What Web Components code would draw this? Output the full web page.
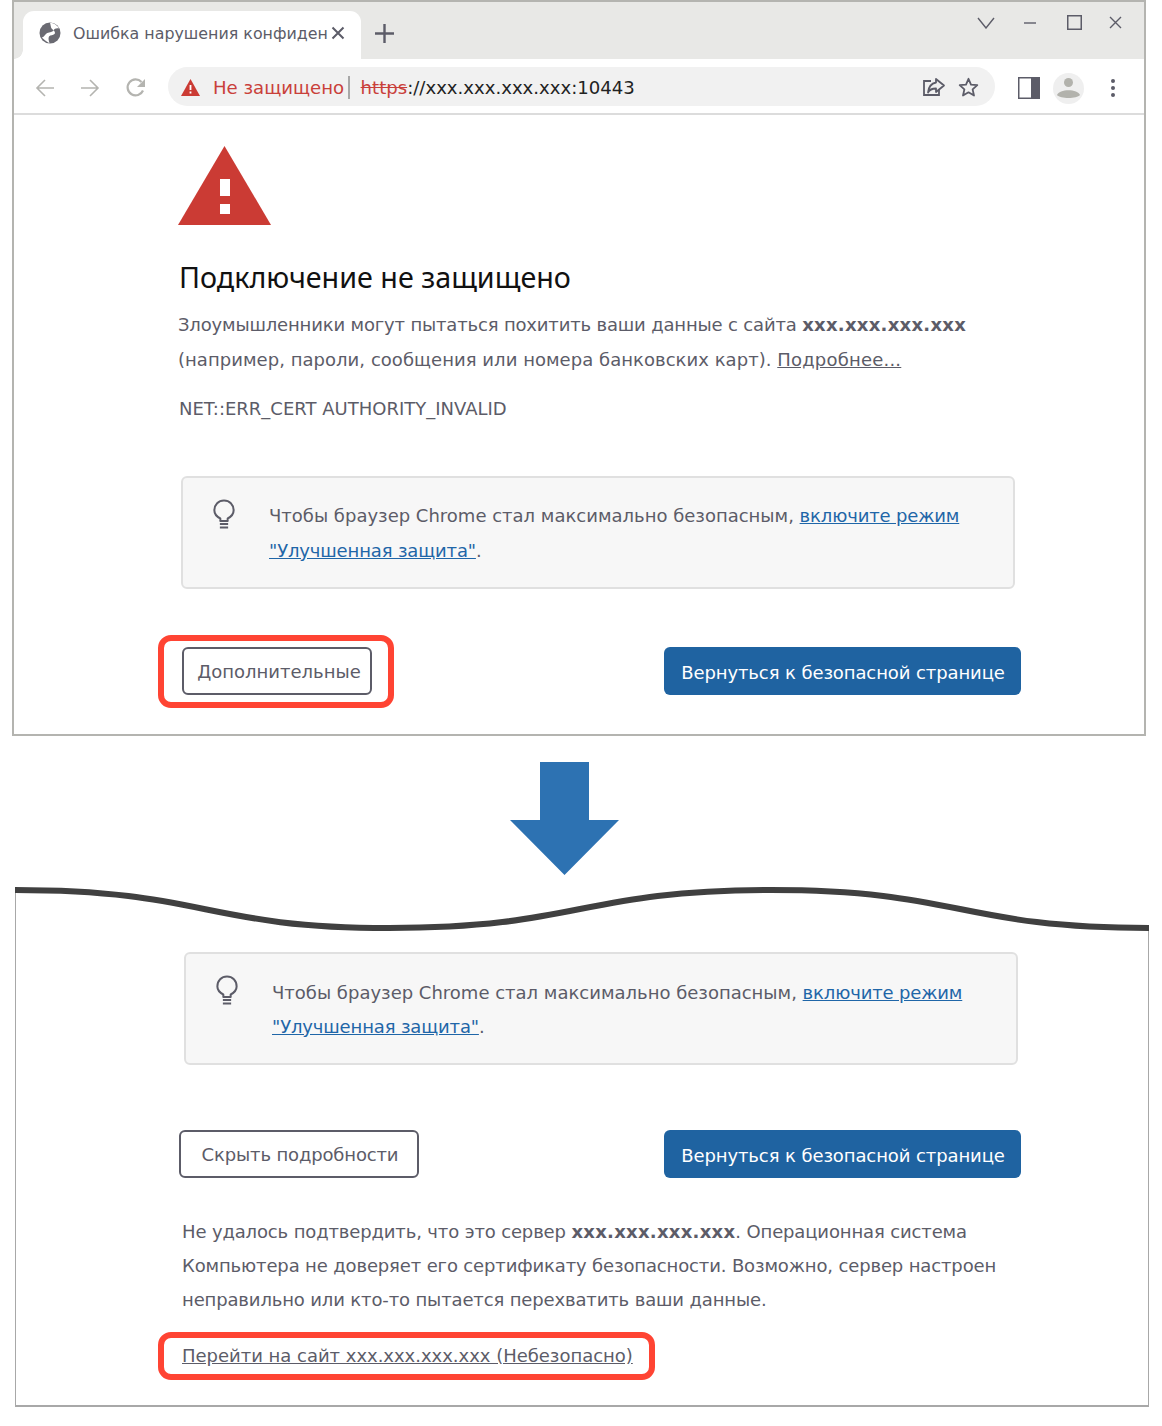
<!DOCTYPE html>
<html lang="ru">
<head>
<meta charset="utf-8">
<title>Ошибка нарушения конфиденциальности</title>
<style>
  html, body { margin: 0; padding: 0; background: #fff; }
  body {
    width: 1162px;
    height: 1426px;
    overflow: hidden;
    font-family: "DejaVu Sans", sans-serif;
    color: #5c5c68;
  }
  b { font-weight: 700; letter-spacing: .27px; }
  a { text-decoration: underline; color: inherit; }
  a.blue { color: #1f66a8; letter-spacing: -.15px; }
</style>
</head>
<body>

<browser-window>
  <warning-page>
    <span slot="heading">Подключение не защищено</span>
    <span slot="message"><span style="letter-spacing:-.17px">Злоумышленники могут пытаться похитить ваши данные с сайта </span><b>xxx.xxx.xxx.xxx</b><br><span style="letter-spacing:.04px">(например, пароли, сообщения или номера банковских карт). </span><a style="letter-spacing:.2px">Подробнее...</a></span>
    <span slot="code">NET::ERR_CERT AUTHORITY_INVALID</span>
  </warning-page>
  <info-box style="margin: 0 0 46px 167px">Чтобы браузер Chrome стал максимально безопасным, <a class="blue">включите режим<br>"Улучшенная защита"</a>.</info-box>
  <action-row style="padding-left: 144px">
    <red-ring style="--pad: 6px 16px 7px 18px"><outline-button style="--w: 190px; --text-pad: 4px">Дополнительные</outline-button></red-ring>
    <primary-button style="margin-top: 12px">Вернуться к безопасной странице</primary-button>
  </action-row>
</browser-window>

<down-arrow></down-arrow>

<torn-panel>
  <info-box style="margin: 0 0 65px 168px; --line: 34px; --top: 1px">Чтобы браузер Chrome стал максимально безопасным, <a class="blue">включите режим<br>"Улучшенная защита"</a>.</info-box>
  <action-row style="padding-left: 163px; padding-right: 127px">
    <outline-button style="--w: 240px; --text-pad: 2px; letter-spacing: -.15px">Скрыть подробности</outline-button>
    <primary-button>Вернуться к безопасной странице</primary-button>
  </action-row>
  <detail-text>Не удалось подтвердить, что это сервер <b>xxx.xxx.xxx.xxx</b>. Операционная система<br>Компьютера не доверяет его сертификату безопасности. Возможно, сервер настроен<br>неправильно или кто-то пытается перехватить ваши данные.</detail-text>
  <div style="padding-left: 142px">
    <red-ring style="--pad: 0 16px 1px 18px; --inline: inline-flex"><a style="font-size: 18px; line-height: 35px; white-space: nowrap; letter-spacing: -.02px">Перейти на сайт xxx.xxx.xxx.xxx (Небезопасно)</a></red-ring>
  </div>
</torn-panel>

<script>
// small helper: every element just stamps its markup into an open shadow root
function shadow(el, html) {
  el.attachShadow({ mode: 'open' }).innerHTML = html;
}

class BrowserWindow extends HTMLElement {
  constructor() {
    super();
    shadow(this, `
      <style>
        :host {
          display: block;
          box-sizing: border-box;
          width: 1134px;
          height: 736px;
          margin-left: 12px;
          border: 2px solid #b4b4b0;
        }
      </style>
      <tab-strip></tab-strip>
      <nav-toolbar></nav-toolbar>
      <slot></slot>
    `);
  }
}

class TabStrip extends HTMLElement {
  constructor() {
    super();
    shadow(this, `
      <style>
        :host {
          display: flex;
          align-items: flex-end;
          height: 57px;
          background: #e8e8e6;
          color: #5c5c68;
        }
        .tab {
          position: relative;
          display: flex;
          align-items: center;
          box-sizing: border-box;
          width: 338px;
          height: 48px;
          margin-left: 9px;
          padding: 0 0 4px 16px;
          background: #fff;
          border-radius: 11px 11px 0 0;
        }
        .tab::before {
          content: "";
          position: absolute;
          left: -9px;
          bottom: 0;
          width: 9px;
          height: 9px;
          background: radial-gradient(circle at 0 0, #e8e8e6 8.5px, #fff 9px);
        }
        .title {
          width: 257px;
          margin: 2px 0 0 12px;
          overflow: hidden;
          white-space: nowrap;
          font-size: 15.85px;
          line-height: 24px;
        }
        .plus { margin: 0 0 15px 13px; }
        .controls {
          display: flex;
          align-items: center;
          margin: 0 0 29px auto;
          padding-right: 22px;
          gap: 28px;
        }
        svg { display: block; flex: none; }
      </style>
      <div class="tab">
        <svg width="22" height="22" viewBox="0 0 22 22"><circle cx="11" cy="11" r="10.5" fill="#6a6a72"/><path d="M11 .8C15 1 18.500 3.500 20 6.500 17.500 5.800 15.500 6.500 14.500 8.500 13 10.500 9.500 10 7.500 11.500 5.500 13 5 15 2.800 15.500 4.500 17 7 19.500 10.500 21.200 9.800 18.500 9 16.500 10 14.500 11.500 12.800 14 13.500 15.500 12 17 10.500 15 8.500 13 7 11.500 5.500 11.800 3 11 .8Z" fill="#fff"/></svg>
        <span class="title">Ошибка нарушения конфиден</span>
        <svg width="14" height="14" viewBox="0 0 14 14" style="margin-left:1px"><path d="M1.500 1.500 12.500 12.500M12.500 1.500 1.500 12.500" stroke="#5c5c68" stroke-width="2"/></svg>
      </div>
      <svg class="plus" width="21" height="21" viewBox="0 0 21 21"><path d="M10.500 1V20M1 10.500H20" stroke="#5c5c68" stroke-width="2.400"/></svg>
      <div class="controls">
        <svg width="18" height="12" viewBox="0 0 18 12" style="margin-right:2px"><path d="M1 1 9 11 17 1" fill="none" stroke="#5c5c68" stroke-width="1.400"/></svg>
        <svg width="12" height="12" viewBox="0 0 12 12" style="margin-left:-1px"><path d="M0 6H12" stroke="#5c5c68" stroke-width="1.400"/></svg>
        <svg width="15" height="15" viewBox="0 0 15 15" style="margin-left:3px"><rect x=".75" y=".75" width="13.500" height="13.500" fill="none" stroke="#5c5c68" stroke-width="1.500"/></svg>
        <svg width="13" height="13" viewBox="0 0 13 13" style="margin-left:-1px"><path d="M1 1 12 12M12 1 1 12" stroke="#5c5c68" stroke-width="1.400"/></svg>
      </div>
    `);
  }
}

class NavToolbar extends HTMLElement {
  constructor() {
    super();
    shadow(this, `
      <style>
        :host {
          display: flex;
          align-items: center;
          box-sizing: border-box;
          height: 56px;
          padding: 0 0 0 21px;
          background: #fff;
          border-bottom: 2px solid #dcdcdc;
        }
        svg { display: block; flex: none; }
        .nudge { margin-top: 4px; }
        .omnibox {
          display: flex;
          align-items: center;
          box-sizing: border-box;
          width: 827px;
          height: 39px;
          margin-left: 21px;
          padding: 2px 16px 0 13px;
          border-radius: 20px;
          background: #f1f1f1;
          font-size: 18.1px;
          white-space: nowrap;
          color: #222;
        }
        .insecure { margin-left: 13px; color: #c9403a; }
        .sep { width: 1.5px; height: 23px; margin: 0 11px 0 4px; background: #a8a8a8; }
        .scheme { color: #c9403a; text-decoration: line-through; }
        .tail { display: flex; align-items: center; gap: 12px; margin-left: auto; }
        .right { display: flex; align-items: center; margin: 4px 0 0 23px; }
        .avatar { margin-left: 13px; }
        .dots { margin-left: 26px; }
      </style>
      <svg class="nudge" width="20" height="20" viewBox="0 0 20 20"><path d="M19 10H2M10 2 2 10 10 18" fill="none" stroke="#b4b4b0" stroke-width="1.600"/></svg>
      <svg class="nudge" width="20" height="20" viewBox="0 0 20 20" style="margin-left:25px"><path d="M1 10H18M10 2 18 10 10 18" fill="none" stroke="#b4b4b0" stroke-width="1.600"/></svg>
      <svg class="nudge" width="22" height="22" viewBox="0 0 22 22" style="margin-left:25px"><path d="M18 13.500A8 8 0 1 1 16.500 5" fill="none" stroke="#b4b4b0" stroke-width="2.200"/><path d="M20 2V10H12Z" fill="#b4b4b0"/></svg>
      <div class="omnibox">
        <svg width="19" height="17" viewBox="0 0 19 17"><path d="M9.500 0 19 17H0Z" fill="#cb3b34"/><path d="M8.600 6H10.400V11H8.600ZM8.600 12.500H10.400V14.400H8.600Z" fill="#fff"/></svg>
        <span class="insecure">Не защищено</span>
        <span class="sep"></span>
        <span><span class="scheme">https</span>://xxx.xxx.xxx.xxx:10443</span>
        <span class="tail">
          <svg width="24" height="20" viewBox="0 0 24 20"><path d="M9 4H2V18H17V13" fill="none" stroke="#5c5c68" stroke-width="1.800"/><path d="M14 2 22 8.500 14 15V11.500C10 11.500 7.500 12.500 6 15.500 6.500 10.500 9 6.500 14 5.500Z" fill="#f1f1f1" stroke="#5c5c68" stroke-width="1.800" stroke-linejoin="round"/></svg>
          <svg width="21" height="20" viewBox="0 0 21 20"><path d="M10.500 1.800 13 7.600 19.300 8.200 14.600 12.400 16 18.500 10.500 15.300 5 18.500 6.400 12.400 1.700 8.200 8 7.600Z" fill="none" stroke="#5c5c68" stroke-width="1.800" stroke-linejoin="round"/></svg>
        </span>
      </div>
      <div class="right">
        <svg width="22" height="22" viewBox="0 0 22 22"><rect x=".75" y=".75" width="20.500" height="20.500" fill="#fff" stroke="#5c5c68" stroke-width="1.500"/><rect x="13" y="0" width="9" height="22" fill="#5c5c68"/></svg>
        <svg class="avatar" width="31" height="31" viewBox="0 0 31 31"><circle cx="15.500" cy="15.500" r="15.500" fill="#efefef"/><circle cx="15.500" cy="9.500" r="4.500" fill="#b2b2ac"/><path d="M4 22C6 15.500 25 15.500 27 22 24 26 7 26 4 22Z" fill="#b2b2ac"/></svg>
        <svg class="dots" width="6" height="20" viewBox="0 0 6 20"><circle cx="3" cy="3" r="2" fill="#5c5c68"/><circle cx="3" cy="10" r="2" fill="#5c5c68"/><circle cx="3" cy="17" r="2" fill="#5c5c68"/></svg>
      </div>
    `);
  }
}

class WarningPage extends HTMLElement {
  constructor() {
    super();
    shadow(this, `
      <style>
        :host {
          display: block;
          padding: 31px 0 0 164px;
          height: 361px;
          box-sizing: border-box;
        }
        svg { display: block; }
        h1 {
          margin: 32px 0 0 1px;
          font-size: 28.7px;
          line-height: 39px;
          font-weight: 400;
          color: #111;
          font-family: "Noto Sans", "DejaVu Sans", sans-serif;
        }
        p { margin: 11px 0 0; font-size: 18px; line-height: 35px; white-space: nowrap; }
        .code { margin: 14px 0 0 1px; line-height: 35px; }
      </style>
      <svg width="93" height="79" viewBox="0 0 93 79"><path d="M46.500 0 93 79H0Z" fill="#cb3b34"/><path d="M42 33H52V50H42ZM42 58H52V68H42Z" fill="#fff"/></svg>
      <h1><slot name="heading"></slot></h1>
      <p><slot name="message"></slot></p>
      <p class="code"><slot name="code"></slot></p>
    `);
  }
}

class InfoBox extends HTMLElement {
  constructor() {
    super();
    shadow(this, `
      <style>
        :host {
          display: flex;
          box-sizing: border-box;
          width: 834px;
          height: 113px;
          padding: 21px 0 0 30px;
          border: 2px solid #e0e0e0;
          border-radius: 6px;
          background: #f7f7f7;
          font-size: 18px;
          line-height: var(--line, 35px);
          white-space: nowrap;
        }
        svg { display: block; flex: none; margin-right: 34px; }
        div { margin-top: var(--top, -1px); }
      </style>
      <svg width="22" height="30" viewBox="0 0 24 30" preserveAspectRatio="none"><path d="M8 22V19.500C4.500 17.800 1.500 15 1.500 11.500 1.500 5.500 6 1.500 12 1.500S22.500 5.500 22.500 11.500C22.500 15 19.500 17.800 16 19.500V22Z" fill="none" stroke="#5c5c68" stroke-width="2.200" stroke-linejoin="round"/><path d="M7.500 25H16.500M7.500 28.500H16.500" stroke="#5c5c68" stroke-width="1.800"/></svg>
      <div><slot></slot></div>
    `);
  }
}

class ActionRow extends HTMLElement {
  constructor() {
    super();
    shadow(this, `
      <style>
        :host {
          display: flex;
          align-items: flex-start;
          justify-content: space-between;
          padding-right: 123px;
        }
      </style>
      <slot></slot>
    `);
  }
}

class OutlineButton extends HTMLElement {
  constructor() {
    super();
    shadow(this, `
      <style>
        :host {
          display: flex;
          align-items: center;
          justify-content: center;
          box-sizing: border-box;
          width: var(--w, 190px);
          height: 48px;
          padding-left: var(--text-pad, 0);
          border: 2px solid #5c5c68;
          border-radius: 6px;
          background: #fff;
          font-size: 18px;
          white-space: nowrap;
        }
      </style>
      <slot></slot>
    `);
  }
}

class PrimaryButton extends HTMLElement {
  constructor() {
    super();
    shadow(this, `
      <style>
        :host {
          display: flex;
          align-items: center;
          justify-content: center;
          box-sizing: border-box;
          width: 357px;
          height: 48px;
          padding: 2px 0 0 1px;
          border-radius: 6px;
          background: #1f63a1;
          color: #fff;
          font-size: 18px;
          letter-spacing: -.1px;
          white-space: nowrap;
        }
      </style>
      <slot></slot>
    `);
  }
}

class RedRing extends HTMLElement {
  constructor() {
    super();
    shadow(this, `
      <style>
        :host {
          display: var(--inline, flex);
          padding: var(--pad, 0);
          border: 6px solid #ff4433;
          border-radius: 13px;
          background: #fff;
        }
      </style>
      <slot></slot>
    `);
  }
}

class DownArrow extends HTMLElement {
  constructor() {
    super();
    shadow(this, `
      <style>
        :host { display: block; height: 113px; padding: 26px 0 0 510px; }
        svg { display: block; }
      </style>
      <svg width="109" height="113" viewBox="0 0 109 113"><path d="M30 0H79V58H109L54.500 113 0 58H30Z" fill="#2d72b2"/></svg>
    `);
  }
}

class TornPanel extends HTMLElement {
  constructor() {
    super();
    shadow(this, `
      <style>
        :host {
          position: relative;
          display: block;
          box-sizing: border-box;
          width: 1134px;
          height: 520px;
          margin: 12px 0 0 15px;
          padding: 65px 0 0;
          border: solid #a8a8a8;
          border-width: 0 1.5px 2px 1.5px;
        }
        svg { position: absolute; left: -1.5px; top: 0; }
      </style>
      <svg width="1136" height="50" viewBox="15 887 1136 50"><path d="M15 887V890C205 890 205 928 389 928 580 928 580 890 771 890 960 890 960 928 1151 928V887Z" fill="#fff"/><path d="M15 890C205 890 205 928 389 928 580 928 580 890 771 890 960 890 960 928 1149 928" fill="none" stroke="#404040" stroke-width="6"/></svg>
      <slot></slot>
    `);
  }
}

class DetailText extends HTMLElement {
  constructor() {
    super();
    shadow(this, `
      <style>
        :host {
          display: block;
          margin: 37px 0 15px 166px;
          font-size: 18px;
          line-height: 34px;
          letter-spacing: -.14px;
          white-space: nowrap;
        }
      </style>
      <slot></slot>
    `);
  }
}

customElements.define('tab-strip', TabStrip);
customElements.define('nav-toolbar', NavToolbar);
customElements.define('browser-window', BrowserWindow);
customElements.define('warning-page', WarningPage);
customElements.define('info-box', InfoBox);
customElements.define('action-row', ActionRow);
customElements.define('outline-button', OutlineButton);
customElements.define('primary-button', PrimaryButton);
customElements.define('red-ring', RedRing);
customElements.define('down-arrow', DownArrow);
customElements.define('torn-panel', TornPanel);
customElements.define('detail-text', DetailText);
</script>
</body>
</html>
